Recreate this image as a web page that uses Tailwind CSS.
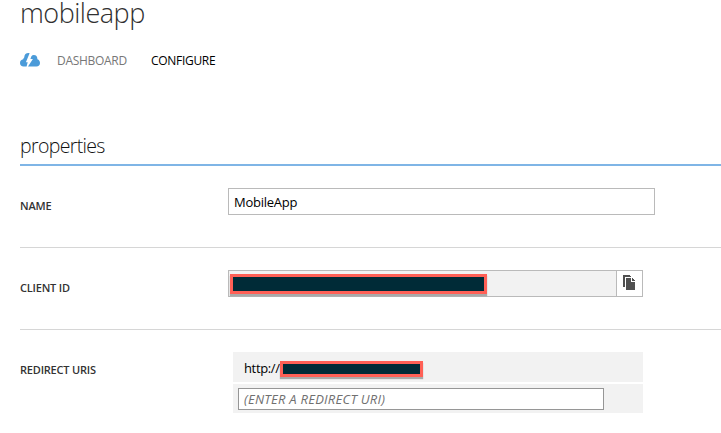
<!DOCTYPE html>
<html lang="en">
<head>
<meta charset="utf-8">
<title>mobileapp</title>
<script src="https://cdn.jsdelivr.net/npm/@tailwindcss/browser@4"></script>
</head>
<body class="h-[433px] overflow-hidden bg-white pl-5 font-['Open_Sans','Noto_Sans',sans-serif] text-black">
<header>
  <h1 class="h-7 text-[27px] leading-[26px] font-light tracking-[-0.5px] text-[#303030] whitespace-nowrap">mobileapp</h1>
  <nav class="mt-[23px] flex h-5 items-center text-[12px] leading-5">
    <svg class="mb-[2px] h-[14px] w-5 shrink-0" viewBox="0 0 20 14" fill="#4b9bd9">
      <path d="M9.600 .2C6.500-.3 4.400 1.200 4.200 4.400 3.500 5 3.500 5.500 3.200 6.200 1.200 6.500 0 7.900 0 9.900 0 12.200 1.400 13.400 3.500 13.400H6.600L7.700 9.200H5.900L9.600 .2Z"/>
      <path d="M13.800 2C16.100 2 17.500 3.600 17.400 6.200 19.100 6.900 20 8.100 20 9.900 20 12.200 18.600 13.400 16.500 13.400H8L12.900 6H10.400L11.400 3.200C12 2.500 12.800 2 13.800 2Z"/>
    </svg>
    <a class="ml-[17px] w-[94px] tracking-[-0.3px] text-[#777]">DASHBOARD</a>
    <a class="tracking-[-0.3px]">CONFIGURE</a>
  </nav>
</header>
<main class="mt-[59px]">
  <h2 class="h-9 border-b-2 border-[#7fb5e6] text-[19.500px] leading-[32px] font-light tracking-[-0.65px] text-[#111]">properties</h2>
  <section class="flex h-[82px] border-b border-[#d6d6d6] pt-[22px]">
    <div class="w-[208px] pt-[9px] text-[11px] leading-[18px] font-semibold tracking-[-0.2px] text-[#333]">NAME</div>
    <div class="h-[27px] w-[427px] border border-[#bababa] pl-[5px] text-[13px] leading-[26px] tracking-[-0.25px]">MobileApp</div>
  </section>
  <section class="flex h-[82px] border-b border-[#d6d6d6] pt-[22px]">
    <div class="w-[208px] pt-[9px] text-[11px] leading-[18px] font-semibold tracking-[-0.2px] text-[#333]">CLIENT ID</div>
    <div class="flex h-[27px] w-[415px] border border-[#bababa]">
      <div class="w-[388px] border-r border-[#bababa] bg-[#f2f2f2] pt-[3px] pl-px">
        <div class="h-5 w-[257px] border-3 border-[#ff6056] bg-[#002b37] shadow-[0_2px_1px_rgba(0,0,0,0.3)]"></div>
      </div>
      <div class="pt-1 pl-[6px]">
        <svg class="h-[15px] w-3" viewBox="0 0 12 15" fill="#505050">
          <path d="M0 0h7v1h1v1H2v10H0Z"/>
          <path d="M3 3h5v4h4v8H3Z"/>
          <path d="M9 3h1v1h1v1h1v1H9Z"/>
        </svg>
      </div>
    </div>
  </section>
  <section class="flex pt-[22px]">
    <div class="w-[213px] pt-[9px] text-[11px] leading-[18px] font-semibold tracking-[-0.2px] text-[#333]">REDIRECT URIS</div>
    <div class="w-[410px]">
      <div class="flex h-[30px] bg-[#f2f2f2] pl-[11px]">
        <span class="w-9 text-[13px] leading-[33px] tracking-[-0.35px] whitespace-nowrap">http://</span>
        <div class="mt-[9px] h-4 w-[143px] border-3 border-[#ff6056] bg-[#002b37] shadow-[0_2px_1px_rgba(0,0,0,0.3)]"></div>
      </div>
      <div class="mt-[2px] h-[29px] bg-[#f2f2f2] pt-1 pl-[5px]">
        <div class="h-[22px] w-[366px] border border-[#969696] bg-white pl-[5px] text-[13px] leading-[21px] tracking-[0.250px] text-[#707070] italic">(ENTER A REDIRECT URI)</div>
      </div>
    </div>
  </section>
</main>
</body>
</html>
